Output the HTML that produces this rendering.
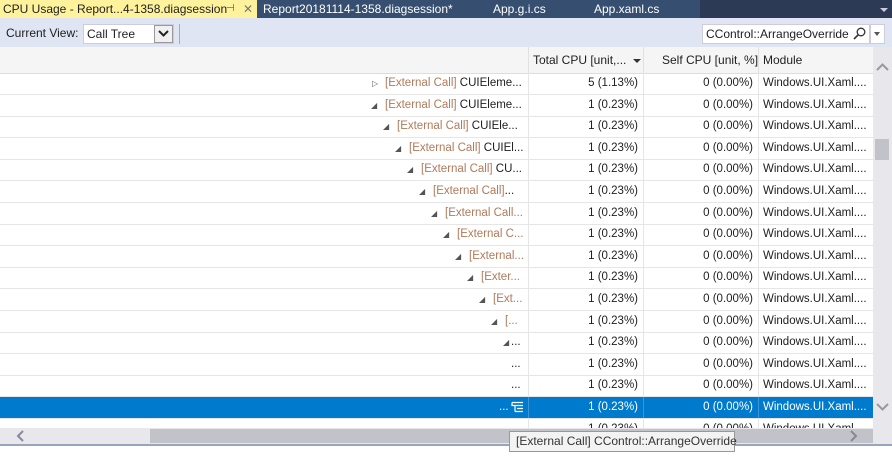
<!DOCTYPE html>
<html><head><meta charset="utf-8"><style>
*{margin:0;padding:0;box-sizing:border-box}
body{width:892px;height:456px;overflow:hidden;background:#fff;font-family:"Segoe UI","Liberation Sans",sans-serif;font-size:11.5px;color:#1e1e1e;position:relative}
.a{position:absolute;white-space:nowrap}
.tab{position:absolute;top:0;height:18px;line-height:18px;font-size:12px;white-space:nowrap}
.row{position:absolute;left:0;width:873px;height:22px;border-bottom:1px solid #e6e6e6}
.c{position:absolute;top:0;height:21px;line-height:21px;white-space:nowrap;border-right:1px solid #e6e6e6}
.t{left:0;width:529px}
.tot{left:529px;width:115px;text-align:right;padding-right:5px}
.self{left:644px;width:115px;text-align:right;padding-right:5px}
.mod{left:759px;width:114px;padding-left:4px;border-right:none}
.ec{color:#b07a5a}
.tr{position:absolute;top:0;font-size:8px;color:#555}
.tx{position:absolute;top:0}
.sel{background:#007acc;color:#fff}
.sel .c{border-color:#3c96d8}
</style></head><body>
<div class="a" style="left:0;top:0;width:892px;height:18px;background:#2d3a55"></div>
<div class="a" style="left:257px;top:0;width:443px;height:18px;background:#364e6f"></div>
<div class="a" style="left:0;top:0;width:257px;height:18px;background:#fff29d"></div>
<div class="tab" style="left:3px;color:#1e1e1e">CPU Usage - Report...4-1358.diagsession</div>
<div class="tab" style="left:226px;color:#555;font-size:10px">&#8867;</div>
<div class="tab" style="left:243px;color:#777">✕</div>
<div class="tab" style="left:263px;color:#fff">Report20181114-1358.diagsession*</div>
<div class="tab" style="left:493px;color:#fff">App.g.i.cs</div>
<div class="tab" style="left:594px;color:#fff">App.xaml.cs</div>
<div class="a" style="left:880px;top:8px;width:0;height:0;border-left:4px solid transparent;border-right:4px solid transparent;border-top:4px solid #ccd"></div>
<div class="a" style="left:0;top:18px;width:892px;height:29px;background:#dfe5f2"></div>
<div class="a" style="left:6px;top:26px;line-height:14px;font-size:12px">Current View:</div>
<div class="a" style="left:83px;top:24px;width:91px;height:20px;background:#fff;border:1px solid #ccd;line-height:18px;padding-left:3px;font-size:12px">Call Tree</div>
<div class="a" style="left:154px;top:25px;width:19px;height:18px;background:#f0f0f0;border:1px solid #999"></div>
<svg class="a" style="left:158px;top:30px" width="11" height="8"><path d="M1 1l4.5 4.5L10 1" stroke="#222" stroke-width="2" fill="none"/></svg>
<div class="a" style="left:179px;top:24px;width:1px;height:20px;background:#aab"></div>
<div class="a" style="left:702px;top:24px;width:168px;height:20px;background:#fff;border:1px solid #ccd;line-height:18px;padding-left:3px;font-size:12px">CControl::ArrangeOverride</div>
<svg class="a" style="left:853px;top:27px" width="13" height="14"><circle cx="8" cy="5" r="3.8" stroke="#333" stroke-width="1.3" fill="none"/><path d="M5.2 7.8L1 12" stroke="#333" stroke-width="1.6"/></svg>
<div class="a" style="left:870px;top:24px;width:15px;height:20px;background:#fff;border:1px solid #ccd"></div>
<div class="a" style="left:874px;top:32px;border-left:3px solid transparent;border-right:3px solid transparent;border-top:4px solid #555"></div>
<div class="a" style="left:0;top:47px;width:892px;height:27px;background:#f5f5f5;border-bottom:1px solid #ddd"></div>
<div class="a" style="left:528px;top:47px;width:1px;height:27px;background:#e0e0e0"></div>
<div class="a" style="left:643px;top:47px;width:1px;height:27px;background:#e0e0e0"></div>
<div class="a" style="left:758px;top:47px;width:1px;height:27px;background:#e0e0e0"></div>
<div class="a" style="left:533px;top:53px;font-size:12px">Total CPU [unit,...</div>
<div class="a" style="left:633px;top:59px;border-left:4px solid transparent;border-right:4px solid transparent;border-top:4px solid #333"></div>
<div class="a" style="left:662px;top:53px;font-size:12px">Self CPU [unit, %]</div>
<div class="a" style="left:763px;top:53px;font-size:12px">Module</div>

<div class="row" style="top:73px"><div class="c t"><span class="tr" style="left:372px">▷</span><span class="tx" style="left:385px"><span class="ec">[External Call]</span> CUIEleme...</span></div><div class="c tot">5 (1.13%)</div><div class="c self">0 (0.00%)</div><div class="c mod">Windows.UI.Xaml....</div></div>
<div class="row" style="top:94.6px"><div class="c t"><span class="tr" style="left:371px">◢</span><span class="tx" style="left:385px"><span class="ec">[External Call]</span> CUIEleme...</span></div><div class="c tot">1 (0.23%)</div><div class="c self">0 (0.00%)</div><div class="c mod">Windows.UI.Xaml....</div></div>
<div class="row" style="top:116.2px"><div class="c t"><span class="tr" style="left:383px">◢</span><span class="tx" style="left:397px"><span class="ec">[External Call]</span> CUIEle...</span></div><div class="c tot">1 (0.23%)</div><div class="c self">0 (0.00%)</div><div class="c mod">Windows.UI.Xaml....</div></div>
<div class="row" style="top:137.8px"><div class="c t"><span class="tr" style="left:395px">◢</span><span class="tx" style="left:409px"><span class="ec">[External Call]</span> CUIEl...</span></div><div class="c tot">1 (0.23%)</div><div class="c self">0 (0.00%)</div><div class="c mod">Windows.UI.Xaml....</div></div>
<div class="row" style="top:159.4px"><div class="c t"><span class="tr" style="left:407px">◢</span><span class="tx" style="left:421px"><span class="ec">[External Call]</span> CU...</span></div><div class="c tot">1 (0.23%)</div><div class="c self">0 (0.00%)</div><div class="c mod">Windows.UI.Xaml....</div></div>
<div class="row" style="top:181px"><div class="c t"><span class="tr" style="left:419px">◢</span><span class="tx" style="left:433px"><span class="ec">[External Call]</span>...</span></div><div class="c tot">1 (0.23%)</div><div class="c self">0 (0.00%)</div><div class="c mod">Windows.UI.Xaml....</div></div>
<div class="row" style="top:202.6px"><div class="c t"><span class="tr" style="left:431px">◢</span><span class="tx ec" style="left:445px">[External Call...</span></div><div class="c tot">1 (0.23%)</div><div class="c self">0 (0.00%)</div><div class="c mod">Windows.UI.Xaml....</div></div>
<div class="row" style="top:224.2px"><div class="c t"><span class="tr" style="left:443px">◢</span><span class="tx ec" style="left:457px">[External C...</span></div><div class="c tot">1 (0.23%)</div><div class="c self">0 (0.00%)</div><div class="c mod">Windows.UI.Xaml....</div></div>
<div class="row" style="top:245.8px"><div class="c t"><span class="tr" style="left:455px">◢</span><span class="tx ec" style="left:469px">[External...</span></div><div class="c tot">1 (0.23%)</div><div class="c self">0 (0.00%)</div><div class="c mod">Windows.UI.Xaml....</div></div>
<div class="row" style="top:267.4px"><div class="c t"><span class="tr" style="left:467px">◢</span><span class="tx ec" style="left:481px">[Exter...</span></div><div class="c tot">1 (0.23%)</div><div class="c self">0 (0.00%)</div><div class="c mod">Windows.UI.Xaml....</div></div>
<div class="row" style="top:289px"><div class="c t"><span class="tr" style="left:479px">◢</span><span class="tx ec" style="left:493px">[Ext...</span></div><div class="c tot">1 (0.23%)</div><div class="c self">0 (0.00%)</div><div class="c mod">Windows.UI.Xaml....</div></div>
<div class="row" style="top:310.6px"><div class="c t"><span class="tr" style="left:491px">◢</span><span class="tx ec" style="left:505px">[...</span></div><div class="c tot">1 (0.23%)</div><div class="c self">0 (0.00%)</div><div class="c mod">Windows.UI.Xaml....</div></div>
<div class="row" style="top:332.2px"><div class="c t"><span class="tr" style="left:503px">◢</span><span class="tx" style="left:511px">...</span></div><div class="c tot">1 (0.23%)</div><div class="c self">0 (0.00%)</div><div class="c mod">Windows.UI.Xaml....</div></div>
<div class="row" style="top:353.8px"><div class="c t"><span class="tx" style="left:511px">...</span></div><div class="c tot">1 (0.23%)</div><div class="c self">0 (0.00%)</div><div class="c mod">Windows.UI.Xaml....</div></div>
<div class="row" style="top:375.4px"><div class="c t"><span class="tx" style="left:511px">...</span></div><div class="c tot">1 (0.23%)</div><div class="c self">0 (0.00%)</div><div class="c mod">Windows.UI.Xaml....</div></div>
<div class="row sel" style="top:397px"><div class="c t"><span class="tx" style="left:499px">...</span><svg style="position:absolute;left:511px;top:4px" width="13" height="13"><path d="M1 1.5h11M4 4.5h8M6 7.5h6M4 10.5h8M1 1.5v3h3M4 4.5v6" stroke="#fff" stroke-width="1.2" fill="none"/></svg></div><div class="c tot">1 (0.23%)</div><div class="c self">0 (0.00%)</div><div class="c mod">Windows.UI.Xaml....</div></div>
<div class="row" style="top:418.6px"><div class="c t"></div><div class="c tot">1 (0.23%)</div><div class="c self">0 (0.00%)</div><div class="c mod">Windows.UI.Xaml....</div></div>
<div class="a" style="left:873px;top:47px;width:19px;height:382px;background:#e8e8ec"></div>
<div class="a" style="left:875px;top:139px;width:14px;height:21px;background:#c2c3c9"></div>
<svg class="a" style="left:876px;top:63px" width="13" height="9"><path d="M1 7l5.5-5.5L12 7" stroke="#999" stroke-width="2" fill="none"/></svg>
<svg class="a" style="left:876px;top:402px" width="13" height="9"><path d="M1 2l5.5 5.5L12 2" stroke="#999" stroke-width="2" fill="none"/></svg>
<div class="a" style="left:0;top:428px;width:892px;height:16px;background:#e8e8ec"></div>
<div class="a" style="left:150px;top:429px;width:723px;height:14px;background:#c2c3c9"></div>
<svg class="a" style="left:16px;top:430px" width="9" height="12"><path d="M7 1L2 6l5 5" stroke="#868999" stroke-width="2" fill="none"/></svg>
<svg class="a" style="left:849px;top:430px" width="9" height="12"><path d="M2 1l5 5-5 5" stroke="#868999" stroke-width="2" fill="none"/></svg>
<div class="a" style="left:0;top:444px;width:892px;height:2px;background:#9aa4c0"></div>
<div class="a" style="left:509px;top:431px;width:226px;height:21px;background:#f3f3f3;border:1px solid #999;line-height:19px;padding-left:6px;color:#333;font-size:12px;white-space:nowrap">[External Call] CControl::ArrangeOverride</div>
</body></html>
